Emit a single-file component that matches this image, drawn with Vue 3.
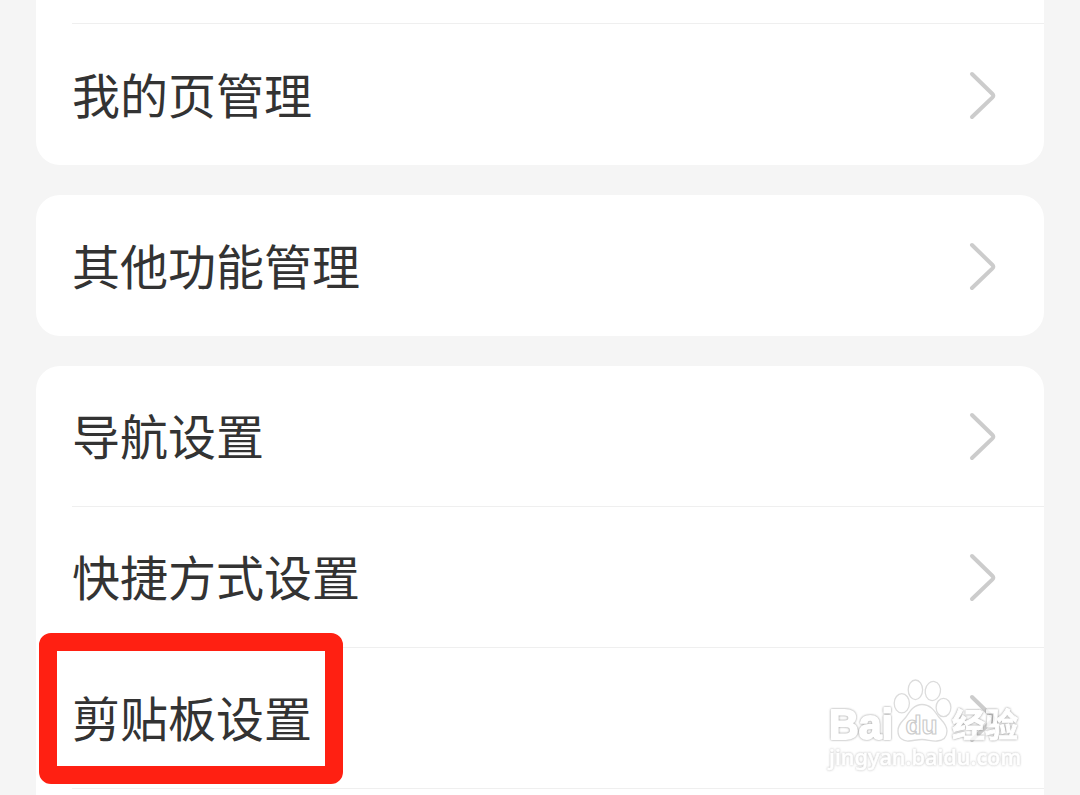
<script setup>
import { ref } from 'vue'

const groups = ref([
  { id: 'mine', tail: true, items: ['我的页管理'] },
  { id: 'other', items: ['其他功能管理'] },
  { id: 'setting', items: ['导航设置', '快捷方式设置', '剪贴板设置'], open: true }
])
const marked = ref('剪贴板设置')
</script>

<template>
  <main class="page">
    <section
      v-for="group in groups"
      :key="group.id"
      class="card"
      :class="{ tail: group.tail, open: group.open }"
    >
      <div v-if="group.tail" class="previous"></div>
      <div v-for="item in group.items" :key="item" class="row">
        <span class="label">{{ item }}</span>
        <svg class="arrow" width="32" height="52" viewBox="0 0 32 52">
          <path d="M5 5 L25.5 25 Q27.2 26.7 25.5 28.4 L5 48" />
        </svg>
        <div v-if="item === marked" class="mark"></div>
      </div>
    </section>

    <svg class="watermark" width="230" height="120" viewBox="810 670 230 120">
      <g class="paw">
        <ellipse cx="901.8" cy="703.3" rx="7.6" ry="9.6" />
        <ellipse cx="915.4" cy="689.8" rx="7.2" ry="9.8" />
        <ellipse cx="932.8" cy="691" rx="7.6" ry="9.6" transform="rotate(10 932.8 691)" />
        <ellipse cx="943.5" cy="707.5" rx="7.4" ry="9.2" />
        <path d="M922 704.5 C914 704.5 910 711 906 717 C902 722 898 724 898 731 C898 738 903 741.5 909 741 C914 740.5 918 739.5 922 739.5 C928 739.5 931 741.5 937 741 C943 740.5 947 737 947 731 C947 724 942 721 938 716 C934 710 930 704.5 922 704.5 Z" />
      </g>
      <text class="glow latin" x="829" y="738.5" font-size="43" textLength="64" lengthAdjust="spacingAndGlyphs">Bai</text>
      <text class="du" x="905.5" y="734" font-size="26" textLength="32" lengthAdjust="spacingAndGlyphs">du</text>
      <text class="glow cjk" x="952" y="736.5" font-size="33" textLength="66">经验</text>
      <text class="glow url" x="829" y="765" font-size="22" textLength="192" lengthAdjust="spacingAndGlyphs">jingyan.baidu.com</text>
    </svg>
  </main>
</template>

<style>
body {
  margin: 0;
  background: #f5f5f5;
}
</style>

<style scoped>
.page {
  position: relative;
  display: flex;
  flex-direction: column;
  gap: 30px;
  box-sizing: border-box;
  height: 795px;
  padding: 0 36px;
  overflow: hidden;
  background: #f5f5f5;
  font-family: "Noto Sans CJK SC", sans-serif;
}
.card {
  flex: none;
  border-radius: 24px;
  background: #fff;
}
.tail {
  border-radius: 0 0 24px 24px;
}
.open {
  height: 460px;
  border-radius: 24px 24px 0 0;
}
.previous {
  height: 23px;
  margin-left: 36px;
  border-bottom: 1px solid #efefef;
}
.row {
  position: relative;
  display: flex;
  align-items: center;
  justify-content: space-between;
  box-sizing: border-box;
  height: 141px;
  margin-left: 36px;
  padding-right: 45px;
}
.open .row {
  border-bottom: 1px solid #efefef;
}
.label {
  padding-bottom: 4px;
  color: #333;
  font-size: 48px;
  line-height: 70px;
}
.arrow path {
  fill: none;
  stroke: #ccc;
  stroke-width: 4;
  stroke-linecap: round;
}
.mark {
  position: absolute;
  top: -15px;
  left: -33px;
  box-sizing: border-box;
  width: 304px;
  height: 151px;
  border: 18px solid #ff2012;
  border-radius: 12px;
}
.watermark {
  position: absolute;
  top: 670px;
  left: 810px;
}
.paw {
  fill: #fff;
  stroke: #dcdcdc;
  stroke-width: 1.3;
}
.glow {
  fill: #fff;
  stroke: #fff;
  stroke-width: 2;
  stroke-linejoin: round;
  opacity: 0.8;
  filter: drop-shadow(0 0 1px #777);
}
.latin {
  font-family: "Liberation Sans", sans-serif;
  font-weight: 700;
}
.du {
  fill: #fff;
  stroke: #ccc;
  stroke-width: 1.2;
  font-family: "Liberation Sans", sans-serif;
  font-weight: 700;
}
.cjk {
  stroke-width: 1;
  font-family: "Noto Sans CJK SC", sans-serif;
  font-weight: 700;
}
.url {
  font-family: "Noto Sans", sans-serif;
  font-weight: 500;
  stroke-width: 0.6;
  filter: drop-shadow(0 0 1px #aaa);
}
</style>
